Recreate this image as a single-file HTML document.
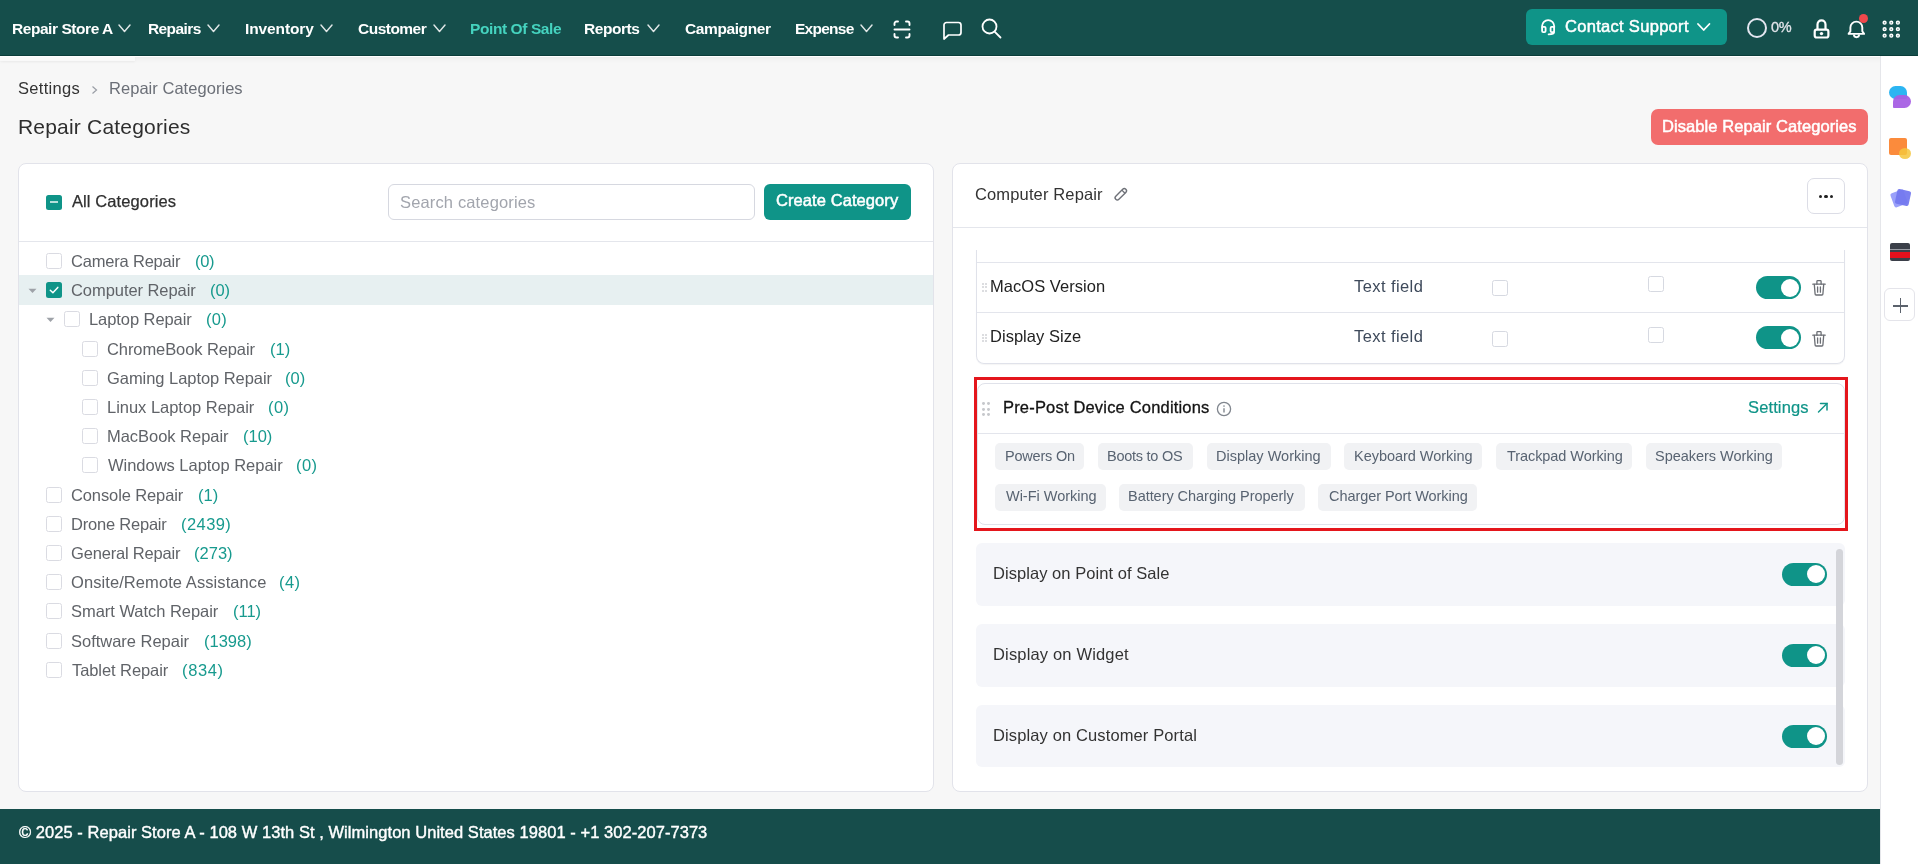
<!DOCTYPE html>
<html><head><meta charset="utf-8"><title>Repair Categories</title><style>
*{box-sizing:border-box;margin:0;padding:0}
html,body{width:1918px;height:864px;overflow:hidden;background:#f7f7f7;font-family:"Liberation Sans",sans-serif;color:#333}
.t{position:absolute;white-space:nowrap;will-change:transform}
.box,.ic,.cb,.tog,.card{position:absolute}
#nav{position:absolute;left:0;top:0;width:1918px;height:56px;background:#154e4b;box-shadow:inset 0 -1px 0 #0a3d39,0 1px 0 #fff,0 3px 5px rgba(0,0,0,.05)}
#side{position:absolute;left:1880px;top:56px;width:38px;height:808px;background:#fff;border-left:1px solid #e5e6ea}
#footer{position:absolute;left:0;top:809px;width:1880px;height:55px;background:#164d4b}
.card{background:#fff;border:1px solid #e2e3ea;border-radius:8px}
.cb{width:16px;height:16px;border:1px solid #dadbe2;border-radius:2.5px;background:#fff}
.tog{width:45px;height:23px;border-radius:12px;background:#0f9488}
.tog:after{content:"";position:absolute;left:25px;top:2.5px;width:18px;height:18px;border-radius:50%;background:#fff}
</style></head><body>
<div id="nav"></div>
<div class="box" style="left:0;top:57px;width:135px;height:4px;background:#f9f9f9;box-shadow:0 1px 3px rgba(0,0,0,.05)"></div>
<div id="t1" class="t" style="left:11.70px;top:20px;font-size:15.5px;line-height:17px;color:#fff;font-weight:bold;letter-spacing:-0.445px">Repair Store A</div>
<div id="t2" class="t" style="left:148.20px;top:20px;font-size:15.5px;line-height:17px;color:#fff;font-weight:bold;letter-spacing:-0.600px">Repairs</div>
<div id="t3" class="t" style="left:244.96px;top:20px;font-size:15.5px;line-height:17px;color:#fff;font-weight:bold;letter-spacing:-0.118px">Inventory</div>
<div id="t4" class="t" style="left:358.02px;top:20px;font-size:15.5px;line-height:17px;color:#fff;font-weight:bold;letter-spacing:-0.516px">Customer</div>
<div id="t5" class="t" style="left:470.20px;top:20px;font-size:15.5px;line-height:17px;color:#45d3bf;font-weight:bold;letter-spacing:-0.405px">Point Of Sale</div>
<div id="t6" class="t" style="left:584.20px;top:20px;font-size:15.5px;line-height:17px;color:#fff;font-weight:bold;letter-spacing:-0.460px">Reports</div>
<div id="t7" class="t" style="left:684.50px;top:20px;font-size:15.5px;line-height:17px;color:#fff;font-weight:bold;letter-spacing:-0.397px">Campaigner</div>
<div id="t8" class="t" style="left:794.70px;top:20px;font-size:15.5px;line-height:17px;color:#fff;font-weight:bold;letter-spacing:-0.733px">Expense</div>
<svg class="ic" style="left:118px;top:24px" width="13" height="8.5" viewBox="0 0 13 8.5"><path d="M1 1 L6.5 7.5 L12 1" fill="none" stroke="#dfe6e6" stroke-width="1.45" stroke-linecap="round" stroke-linejoin="round"/></svg>
<svg class="ic" style="left:206.5px;top:24px" width="13" height="8.5" viewBox="0 0 13 8.5"><path d="M1 1 L6.5 7.5 L12 1" fill="none" stroke="#dfe6e6" stroke-width="1.45" stroke-linecap="round" stroke-linejoin="round"/></svg>
<svg class="ic" style="left:320px;top:24px" width="13" height="8.5" viewBox="0 0 13 8.5"><path d="M1 1 L6.5 7.5 L12 1" fill="none" stroke="#dfe6e6" stroke-width="1.45" stroke-linecap="round" stroke-linejoin="round"/></svg>
<svg class="ic" style="left:433.4px;top:24px" width="13" height="8.5" viewBox="0 0 13 8.5"><path d="M1 1 L6.5 7.5 L12 1" fill="none" stroke="#dfe6e6" stroke-width="1.45" stroke-linecap="round" stroke-linejoin="round"/></svg>
<svg class="ic" style="left:647px;top:24px" width="13" height="8.5" viewBox="0 0 13 8.5"><path d="M1 1 L6.5 7.5 L12 1" fill="none" stroke="#dfe6e6" stroke-width="1.45" stroke-linecap="round" stroke-linejoin="round"/></svg>
<svg class="ic" style="left:860px;top:24px" width="13" height="8.5" viewBox="0 0 13 8.5"><path d="M1 1 L6.5 7.5 L12 1" fill="none" stroke="#dfe6e6" stroke-width="1.45" stroke-linecap="round" stroke-linejoin="round"/></svg>
<svg class="ic" style="left:892px;top:19px" width="20" height="21" viewBox="0 0 20 21"><g fill="none" stroke="#fff" stroke-width="1.9" stroke-linecap="round"><path d="M2.5 6 V4.5 A2 2 0 0 1 4.5 2.5 H6"/><path d="M14 2.5 H15.5 A2 2 0 0 1 17.5 4.5 V6"/><path d="M17.5 15 V16.5 A2 2 0 0 1 15.5 18.5 H14"/><path d="M6 18.5 H4.5 A2 2 0 0 1 2.5 16.5 V15"/><path d="M2.5 10.5 H17.5"/></g></svg>
<svg class="ic" style="left:941px;top:20px" width="23" height="21" viewBox="0 0 23 21"><path d="M3 19 V5 A2.5 2.5 0 0 1 5.5 2.5 H17.5 A2.5 2.5 0 0 1 20 5 V12.5 A2.5 2.5 0 0 1 17.5 15 H7.5 Z" fill="none" stroke="#fff" stroke-width="1.7" stroke-linejoin="round"/></svg>
<svg class="ic" style="left:980px;top:17px" width="23" height="23" viewBox="0 0 23 23"><circle cx="9.5" cy="9.5" r="7" fill="none" stroke="#fff" stroke-width="1.8"/><path d="M14.6 14.6 L20.5 20.5" stroke="#fff" stroke-width="1.8" stroke-linecap="round"/></svg>
<div class="box" style="left:1526px;top:9px;width:201px;height:36px;background:#0f9488;border-radius:6px"></div>
<svg class="ic" style="left:1539px;top:17px" width="19" height="20" viewBox="0 0 19 20"><g fill="none" stroke="#fff" stroke-width="1.8" stroke-linecap="round" stroke-linejoin="round"><path d="M3.1 10.5 V9.1 A6.05 6.05 0 0 1 15.2 9.1 V10.5"/><rect x="3.1" y="9.9" width="3.5" height="5.3" rx="1.1"/><rect x="11.6" y="9.9" width="3.5" height="5.3" rx="1.1"/><path d="M15.1 15 Q15.1 17.3 9.6 17.3"/></g></svg>
<div id="t9" class="t" style="left:1564.52px;top:17px;font-size:16.5px;line-height:18px;color:#fff;letter-spacing:0.302px;-webkit-text-stroke:0.5px #fff">Contact Support</div>
<svg class="ic" style="left:1697.4px;top:22.6px" width="13.4" height="8" viewBox="0 0 13.4 8"><path d="M1 1 L6.7 7 L12.4 1" fill="none" stroke="#fff" stroke-width="1.8" stroke-linecap="round" stroke-linejoin="round"/></svg>
<div class="box" style="left:1747px;top:18px;width:20px;height:20px;border:2px solid #e4e6f0;border-radius:50%"></div>
<div id="t10" class="t" style="left:1771.00px;top:19px;font-size:14.5px;line-height:16px;color:#e2e4ea;letter-spacing:-0.280px;-webkit-text-stroke:0.3px #e2e4ea">0%</div>
<svg class="ic" style="left:1811px;top:17px" width="21" height="23" viewBox="0 0 21 23"><g fill="none" stroke="#fff" stroke-width="2.2"><path d="M6.5 12.5 V7.4 A4 4 0 0 1 14.5 7.4 V12.5"/><rect x="3.7" y="12.7" width="13.7" height="7.8" rx="2"/></g><circle cx="10.5" cy="16.6" r="1.7" fill="#fff"/></svg>
<svg class="ic" style="left:1846px;top:18px" width="21" height="22" viewBox="0 0 21 22"><g fill="none" stroke="#fff" stroke-width="1.9" stroke-linejoin="round"><path d="M2.6 15.9 H18.1 L16.3 13.2 V9.6 A5.8 5.8 0 0 0 4.4 9.6 V13.2 Z"/><path d="M7.9 16.6 A2.6 2.6 0 0 0 13.1 16.6"/></g></svg>
<div class="box" style="left:1859px;top:14px;width:9px;height:9px;background:#f0484c;border-radius:50%"></div>
<svg class="ic" style="left:1880px;top:18px" width="22" height="22" viewBox="0 0 22 22"><circle cx="4.6" cy="4.7" r="1.45" fill="rgba(255,255,255,.4)" stroke="#fff" stroke-width="1.4"/><circle cx="4.6" cy="11.2" r="1.45" fill="rgba(255,255,255,.4)" stroke="#fff" stroke-width="1.4"/><circle cx="4.6" cy="17.7" r="1.45" fill="rgba(255,255,255,.4)" stroke="#fff" stroke-width="1.4"/><circle cx="11.3" cy="4.7" r="1.45" fill="rgba(255,255,255,.4)" stroke="#fff" stroke-width="1.4"/><circle cx="11.3" cy="11.2" r="1.45" fill="rgba(255,255,255,.4)" stroke="#fff" stroke-width="1.4"/><circle cx="11.3" cy="17.7" r="1.45" fill="rgba(255,255,255,.4)" stroke="#fff" stroke-width="1.4"/><circle cx="17.9" cy="4.7" r="1.45" fill="rgba(255,255,255,.4)" stroke="#fff" stroke-width="1.4"/><circle cx="17.9" cy="11.2" r="1.45" fill="rgba(255,255,255,.4)" stroke="#fff" stroke-width="1.4"/><circle cx="17.9" cy="17.7" r="1.45" fill="rgba(255,255,255,.4)" stroke="#fff" stroke-width="1.4"/></svg>
<div id="side"></div>
<div class="box" style="left:1889px;top:86px;width:18px;height:12.5px;background:#2cb5f2;border-radius:7px 7px 2px 7px"></div>
<div class="box" style="left:1893px;top:95px;width:18px;height:12.5px;background:#a65fe4;border-radius:7px 7px 7px 1px;opacity:.95"></div>
<div class="box" style="left:1889px;top:138px;width:18px;height:16.5px;background:#fb8b3c;border-radius:2px"></div>
<div class="box" style="left:1899px;top:148px;width:12px;height:11px;background:#f5c63c;border-radius:50%;opacity:.85"></div>
<div class="box" style="left:1892px;top:191px;width:14px;height:15px;background:#9aa0fa;border-radius:2px;transform:rotate(-20deg)"></div>
<div class="box" style="left:1896px;top:190px;width:14px;height:15px;background:#7479ef;border-radius:2px;transform:rotate(12deg);opacity:.95"></div>
<div class="box" style="left:1890px;top:243px;width:20px;height:18px;background:#3b3f49;border-radius:2px"></div>
<div class="box" style="left:1890px;top:248.5px;width:20px;height:1.5px;background:#9a9ca4"></div>
<div class="box" style="left:1890px;top:251.5px;width:20px;height:6.5px;background:#e5101c"></div>
<div class="box" style="left:1884px;top:288px;width:31px;height:33px;border:1px solid #e4e4ea;border-radius:6px;background:#fff"></div>
<div class="box" style="left:1893px;top:305px;width:15px;height:1.6px;background:#5b626c"></div>
<div class="box" style="left:1899.7px;top:298px;width:1.6px;height:15px;background:#5b626c"></div>
<div id="t11" class="t" style="left:17.70px;top:79px;font-size:16.5px;line-height:18px;color:#333;letter-spacing:0.315px">Settings</div>
<svg class="ic" style="left:91px;top:85px" width="8" height="10" viewBox="0 0 8 10"><path d="M1.5 1.5 L5.5 5 L1.5 8.5" fill="none" stroke="#9a9ea6" stroke-width="1.2"/></svg>
<div id="t12" class="t" style="left:108.70px;top:79px;font-size:16.5px;line-height:18px;color:#6b6f77;letter-spacing:0.038px">Repair Categories</div>
<div id="t13" class="t" style="left:18.20px;top:115px;font-size:21px;line-height:23px;color:#2e2e2e;letter-spacing:0.191px">Repair Categories</div>
<div class="box" style="left:1651px;top:109px;width:217px;height:36px;background:#f26d6d;border-radius:7px"></div>
<div id="t14" class="t" style="left:1662.20px;top:117px;font-size:16.5px;line-height:18px;color:#fff;letter-spacing:0.082px;-webkit-text-stroke:0.5px #fff">Disable Repair Categories</div>
<div class="card" style="left:18px;top:163px;width:916px;height:629px"></div>
<div class="box" style="left:46px;top:195px;width:16px;height:15px;background:#0f9488;border-radius:2.5px"></div>
<div class="box" style="left:50px;top:201.2px;width:8px;height:1.8px;background:#fff;opacity:.7"></div>
<div id="t15" class="t" style="left:72.02px;top:192px;font-size:16.5px;line-height:18px;color:#2f2f2f;letter-spacing:0.101px;-webkit-text-stroke:0.25px #2f2f2f">All Categories</div>
<div class="box" style="left:388px;top:184px;width:367px;height:36px;border:1px solid #d6d8e0;border-radius:6px;background:#fff"></div>
<div id="t16" class="t" style="left:400.20px;top:193px;font-size:16.5px;line-height:18px;color:#a2a5ad;letter-spacing:0.146px">Search categories</div>
<div class="box" style="left:764px;top:184px;width:147px;height:36px;background:#0f9488;border-radius:6px"></div>
<div id="t17" class="t" style="left:776.00px;top:191px;font-size:16.5px;line-height:18px;color:#fff;letter-spacing:0.081px;-webkit-text-stroke:0.5px #fff">Create Category</div>
<div class="box" style="left:19px;top:241px;width:914px;height:1px;background:#e4e6ec"></div>
<div class="box" style="left:19px;top:275px;width:914px;height:30px;background:#e7f0f1"></div>
<div class="cb" style="left:46px;top:253px"></div>
<div id="t18" class="t" style="left:70.70px;top:252px;font-size:16.5px;line-height:18px;color:#606368;letter-spacing:-0.194px">Camera Repair</div>
<div id="t19" class="t" style="left:194.68px;top:252px;font-size:16.5px;line-height:18px;color:#179a8e;letter-spacing:-0.360px">(0)</div>
<div class="box" style="left:46px;top:282px;width:16px;height:16px;background:#0f9488;border-radius:2.5px"></div>
<svg class="ic" style="left:46px;top:282px" width="16" height="16" viewBox="0 0 16 16"><path d="M4.3 8.2 L6.9 10.7 L11.8 5.4" fill="none" stroke="#fff" stroke-width="1.5" stroke-linecap="round" stroke-linejoin="round"/></svg>
<svg class="ic" style="left:28px;top:288px" width="9" height="6" viewBox="0 0 9 6"><path d="M0.5 0.8 H8.5 L4.5 5 Z" fill="#9ea2a8"/></svg>
<div id="t20" class="t" style="left:70.70px;top:281px;font-size:16.5px;line-height:18px;color:#606368;letter-spacing:-0.061px">Computer Repair</div>
<div id="t21" class="t" style="left:210.18px;top:281px;font-size:16.5px;line-height:18px;color:#179a8e;letter-spacing:-0.040px">(0)</div>
<div class="cb" style="left:64px;top:311px"></div>
<svg class="ic" style="left:46px;top:317px" width="9" height="6" viewBox="0 0 9 6"><path d="M0.5 0.8 H8.5 L4.5 5 Z" fill="#9ea2a8"/></svg>
<div id="t22" class="t" style="left:88.70px;top:310px;font-size:16.5px;line-height:18px;color:#606368;letter-spacing:-0.071px">Laptop Repair</div>
<div id="t23" class="t" style="left:206.46px;top:310px;font-size:16.5px;line-height:18px;color:#179a8e;letter-spacing:0.339px">(0)</div>
<div class="cb" style="left:82px;top:341px"></div>
<div id="t24" class="t" style="left:106.70px;top:340px;font-size:16.5px;line-height:18px;color:#606368;letter-spacing:-0.091px">ChromeBook Repair</div>
<div id="t25" class="t" style="left:269.70px;top:340px;font-size:16.5px;line-height:18px;color:#179a8e">(1)</div>
<div class="cb" style="left:82px;top:370px"></div>
<div id="t26" class="t" style="left:106.70px;top:369px;font-size:16.5px;line-height:18px;color:#606368;letter-spacing:-0.051px">Gaming Laptop Repair</div>
<div id="t27" class="t" style="left:285.46px;top:369px;font-size:16.5px;line-height:18px;color:#179a8e;letter-spacing:0.078px">(0)</div>
<div class="cb" style="left:82px;top:399px"></div>
<div id="t28" class="t" style="left:106.70px;top:398px;font-size:16.5px;line-height:18px;color:#606368;letter-spacing:-0.022px">Linux Laptop Repair</div>
<div id="t29" class="t" style="left:267.55px;top:398px;font-size:16.5px;line-height:18px;color:#179a8e;letter-spacing:0.403px">(0)</div>
<div class="cb" style="left:82px;top:428px"></div>
<div id="t30" class="t" style="left:106.70px;top:427px;font-size:16.5px;line-height:18px;color:#606368;letter-spacing:-0.031px">MacBook Repair</div>
<div id="t31" class="t" style="left:243.00px;top:427px;font-size:16.5px;line-height:18px;color:#179a8e">(10)</div>
<div class="cb" style="left:82px;top:457px"></div>
<div id="t32" class="t" style="left:107.50px;top:456px;font-size:16.5px;line-height:18px;color:#606368;letter-spacing:-0.023px">Windows Laptop Repair</div>
<div id="t33" class="t" style="left:295.92px;top:456px;font-size:16.5px;line-height:18px;color:#179a8e;letter-spacing:0.468px">(0)</div>
<div class="cb" style="left:46px;top:487px"></div>
<div id="t34" class="t" style="left:70.70px;top:486px;font-size:16.5px;line-height:18px;color:#606368;letter-spacing:-0.112px">Console Repair</div>
<div id="t35" class="t" style="left:198.00px;top:486px;font-size:16.5px;line-height:18px;color:#179a8e">(1)</div>
<div class="cb" style="left:46px;top:516px"></div>
<div id="t36" class="t" style="left:70.70px;top:515px;font-size:16.5px;line-height:18px;color:#606368;letter-spacing:-0.213px">Drone Repair</div>
<div id="t37" class="t" style="left:181.46px;top:515px;font-size:16.5px;line-height:18px;color:#179a8e;letter-spacing:0.428px">(2439)</div>
<div class="cb" style="left:46px;top:545px"></div>
<div id="t38" class="t" style="left:70.70px;top:544px;font-size:16.5px;line-height:18px;color:#606368;letter-spacing:-0.179px">General Repair</div>
<div id="t39" class="t" style="left:194.46px;top:544px;font-size:16.5px;line-height:18px;color:#179a8e;letter-spacing:0.013px">(273)</div>
<div class="cb" style="left:46px;top:574px"></div>
<div id="t40" class="t" style="left:70.70px;top:573px;font-size:16.5px;line-height:18px;color:#606368;letter-spacing:0.079px">Onsite/Remote Assistance</div>
<div id="t41" class="t" style="left:279.44px;top:573px;font-size:16.5px;line-height:18px;color:#179a8e;letter-spacing:0.468px">(4)</div>
<div class="cb" style="left:46px;top:603px"></div>
<div id="t42" class="t" style="left:70.70px;top:602px;font-size:16.5px;line-height:18px;color:#606368;letter-spacing:-0.035px">Smart Watch Repair</div>
<div id="t43" class="t" style="left:232.70px;top:602px;font-size:16.5px;line-height:18px;color:#179a8e">(11)</div>
<div class="cb" style="left:46px;top:633px"></div>
<div id="t44" class="t" style="left:70.70px;top:632px;font-size:16.5px;line-height:18px;color:#606368;letter-spacing:-0.019px">Software Repair</div>
<div id="t45" class="t" style="left:204.20px;top:632px;font-size:16.5px;line-height:18px;color:#179a8e">(1398)</div>
<div class="cb" style="left:46px;top:662px"></div>
<div id="t46" class="t" style="left:71.50px;top:661px;font-size:16.5px;line-height:18px;color:#606368;letter-spacing:-0.081px">Tablet Repair</div>
<div id="t47" class="t" style="left:181.94px;top:661px;font-size:16.5px;line-height:18px;color:#179a8e;letter-spacing:0.648px">(834)</div>
<div class="card" style="left:952px;top:163px;width:916px;height:629px"></div>
<div id="t48" class="t" style="left:974.68px;top:185px;font-size:16.5px;line-height:18px;color:#333;letter-spacing:0.138px">Computer Repair</div>
<svg class="ic" style="left:1110px;top:184px" width="22" height="22" viewBox="0 0 22 22"><g fill="none" stroke="#6e7178" stroke-width="1.4" transform="rotate(45 10.8 10.3)"><rect x="8.6" y="3.2" width="4.4" height="14.2" rx="2.2"/><path d="M8.6 6.6 H13"/></g></svg>
<div class="box" style="left:1807px;top:178px;width:38px;height:36px;border:1px solid #dcdde6;border-radius:7px;background:#fff"></div>
<div class="box" style="left:1818.9px;top:194.5px;width:3.2px;height:3.2px;border-radius:50%;background:#222"></div>
<div class="box" style="left:1824.4px;top:194.5px;width:3.2px;height:3.2px;border-radius:50%;background:#222"></div>
<div class="box" style="left:1829.9px;top:194.5px;width:3.2px;height:3.2px;border-radius:50%;background:#222"></div>
<div class="box" style="left:953px;top:227px;width:914px;height:1px;background:#e4e6ec"></div>
<div class="box" style="left:976px;top:230px;width:869px;height:134px;border:1px solid #e0e2ea;border-top:none;border-radius:0 0 8px 8px;box-shadow:0 1px 1px rgba(0,0,0,.04)"></div>
<div class="box" style="left:953px;top:228px;width:914px;height:22px;background:#fff"></div>
<div class="box" style="left:977px;top:262px;width:867px;height:1px;background:#e3e5ec"></div>
<div class="box" style="left:977px;top:312px;width:867px;height:1px;background:#e3e5ec"></div>
<div class="box" style="left:981.5px;top:283.0px;width:2.0px;height:2.0px;border-radius:50%;background:#d0d2d6"></div><div class="box" style="left:981.5px;top:286.4px;width:2.0px;height:2.0px;border-radius:50%;background:#d0d2d6"></div><div class="box" style="left:981.5px;top:289.8px;width:2.0px;height:2.0px;border-radius:50%;background:#d0d2d6"></div><div class="box" style="left:984.8px;top:283.0px;width:2.0px;height:2.0px;border-radius:50%;background:#d0d2d6"></div><div class="box" style="left:984.8px;top:286.4px;width:2.0px;height:2.0px;border-radius:50%;background:#d0d2d6"></div><div class="box" style="left:984.8px;top:289.8px;width:2.0px;height:2.0px;border-radius:50%;background:#d0d2d6"></div>
<div id="t49" class="t" style="left:989.70px;top:277px;font-size:16.5px;line-height:18px;color:#222;letter-spacing:0.040px">MacOS Version</div>
<div id="t50" class="t" style="left:1354.00px;top:277px;font-size:16.5px;line-height:18px;color:#3e4a5b;letter-spacing:0.412px">Text field</div>
<div class="cb" style="left:1492px;top:280px;border-color:#d6d9e1"></div>
<div class="cb" style="left:1648px;top:276px;border-color:#d6d9e1"></div>
<div class="tog" style="left:1756px;top:276px"></div>
<svg class="ic" style="left:1811px;top:278px" width="16" height="18" viewBox="0 0 16 18"><g fill="none" stroke="#6b6e74" stroke-width="1.3" stroke-linejoin="round" stroke-linecap="round"><path d="M1.8 6.2 H14.2"/><path d="M5.9 6.2 V3.4 A0.8 0.8 0 0 1 6.7 2.6 H9.3 A0.8 0.8 0 0 1 10.1 3.4 V6.2"/><path d="M3.3 6.4 L4.1 16 A1 1 0 0 0 5.1 17 H10.9 A1 1 0 0 0 11.9 16 L12.7 6.4"/><path d="M6.6 8.9 V14.2"/><path d="M9.4 8.9 V14.2"/></g></svg>
<div class="box" style="left:981.5px;top:333.6px;width:2.0px;height:2.0px;border-radius:50%;background:#d0d2d6"></div><div class="box" style="left:981.5px;top:337.0px;width:2.0px;height:2.0px;border-radius:50%;background:#d0d2d6"></div><div class="box" style="left:981.5px;top:340.4px;width:2.0px;height:2.0px;border-radius:50%;background:#d0d2d6"></div><div class="box" style="left:984.8px;top:333.6px;width:2.0px;height:2.0px;border-radius:50%;background:#d0d2d6"></div><div class="box" style="left:984.8px;top:337.0px;width:2.0px;height:2.0px;border-radius:50%;background:#d0d2d6"></div><div class="box" style="left:984.8px;top:340.4px;width:2.0px;height:2.0px;border-radius:50%;background:#d0d2d6"></div>
<div id="t51" class="t" style="left:989.70px;top:327px;font-size:16.5px;line-height:18px;color:#222;letter-spacing:0.029px">Display Size</div>
<div id="t52" class="t" style="left:1354.00px;top:327px;font-size:16.5px;line-height:18px;color:#3e4a5b;letter-spacing:0.412px">Text field</div>
<div class="cb" style="left:1492px;top:331px;border-color:#d6d9e1"></div>
<div class="cb" style="left:1648px;top:327px;border-color:#d6d9e1"></div>
<div class="tog" style="left:1756px;top:326px"></div>
<svg class="ic" style="left:1811px;top:329px" width="16" height="18" viewBox="0 0 16 18"><g fill="none" stroke="#6b6e74" stroke-width="1.3" stroke-linejoin="round" stroke-linecap="round"><path d="M1.8 6.2 H14.2"/><path d="M5.9 6.2 V3.4 A0.8 0.8 0 0 1 6.7 2.6 H9.3 A0.8 0.8 0 0 1 10.1 3.4 V6.2"/><path d="M3.3 6.4 L4.1 16 A1 1 0 0 0 5.1 17 H10.9 A1 1 0 0 0 11.9 16 L12.7 6.4"/><path d="M6.6 8.9 V14.2"/><path d="M9.4 8.9 V14.2"/></g></svg>
<div class="box" style="left:977px;top:383px;width:868px;height:142px;border:1px solid #e0e2ea;border-radius:8px;background:#fff"></div>
<div class="box" style="left:974px;top:377px;width:874px;height:154px;border:3px solid #e4161c"></div>
<div class="box" style="left:982.3px;top:402.3px;width:2.9px;height:2.9px;border-radius:50%;background:#c6c8cc"></div><div class="box" style="left:982.3px;top:407.7px;width:2.9px;height:2.9px;border-radius:50%;background:#c6c8cc"></div><div class="box" style="left:982.3px;top:413.1px;width:2.9px;height:2.9px;border-radius:50%;background:#c6c8cc"></div><div class="box" style="left:987.4px;top:402.3px;width:2.9px;height:2.9px;border-radius:50%;background:#c6c8cc"></div><div class="box" style="left:987.4px;top:407.7px;width:2.9px;height:2.9px;border-radius:50%;background:#c6c8cc"></div><div class="box" style="left:987.4px;top:413.1px;width:2.9px;height:2.9px;border-radius:50%;background:#c6c8cc"></div>
<div id="t53" class="t" style="left:1003.44px;top:398px;font-size:16.5px;line-height:18px;color:#141414;letter-spacing:0.182px;-webkit-text-stroke:0.3px #141414">Pre-Post Device Conditions</div>
<svg class="ic" style="left:1216px;top:401px" width="16" height="16" viewBox="0 0 16 16"><circle cx="8" cy="8" r="6.6" fill="none" stroke="#80868e" stroke-width="1.3"/><path d="M8 7.2 V11.6" stroke="#80868e" stroke-width="1.4"/><circle cx="8" cy="5.1" r="0.8" fill="#80868e"/></svg>
<div id="t54" class="t" style="left:1748.00px;top:398px;font-size:16.5px;line-height:18px;color:#0f9488;letter-spacing:0.129px;-webkit-text-stroke:0.2px #0f9488">Settings</div>
<svg class="ic" style="left:1816px;top:401px" width="13" height="13" viewBox="0 0 13 13"><g fill="none" stroke="#0f9488" stroke-width="1.5" stroke-linecap="round"><path d="M2.5 11 L11 2.5"/><path d="M4.5 2.5 H11 V9"/></g></svg>
<div class="box" style="left:978px;top:433px;width:866px;height:1px;background:#e3e5ec"></div>
<div class="box" style="left:995.3px;top:443.3px;width:88.5px;height:26.5px;background:#f1f2f4;border-radius:5px"></div>
<div id="t55" class="t" style="left:1004.70px;top:448px;font-size:14.5px;line-height:16px;color:#586371;letter-spacing:-0.200px">Powers On</div>
<div class="box" style="left:1098.2px;top:443.3px;width:94.6px;height:26.5px;background:#f1f2f4;border-radius:5px"></div>
<div id="t56" class="t" style="left:1107.44px;top:448px;font-size:14.5px;line-height:16px;color:#586371;letter-spacing:-0.260px">Boots to OS</div>
<div class="box" style="left:1207.2px;top:443.3px;width:123.6px;height:26.5px;background:#f1f2f4;border-radius:5px"></div>
<div id="t57" class="t" style="left:1216.44px;top:448px;font-size:14.5px;line-height:16px;color:#586371;letter-spacing:0.007px">Display Working</div>
<div class="box" style="left:1344.4px;top:443.3px;width:137.6px;height:26.5px;background:#f1f2f4;border-radius:5px"></div>
<div id="t58" class="t" style="left:1353.96px;top:448px;font-size:14.5px;line-height:16px;color:#586371;letter-spacing:-0.029px">Keyboard Working</div>
<div class="box" style="left:1496.3px;top:443.3px;width:135.3px;height:26.5px;background:#f1f2f4;border-radius:5px"></div>
<div id="t59" class="t" style="left:1506.50px;top:448px;font-size:14.5px;line-height:16px;color:#586371;letter-spacing:-0.070px">Trackpad Working</div>
<div class="box" style="left:1646.1px;top:443.3px;width:136.4px;height:26.5px;background:#f1f2f4;border-radius:5px"></div>
<div id="t60" class="t" style="left:1655.18px;top:448px;font-size:14.5px;line-height:16px;color:#586371;letter-spacing:-0.023px">Speakers Working</div>
<div class="box" style="left:995.3px;top:484.2px;width:110.5px;height:26.5px;background:#f1f2f4;border-radius:5px"></div>
<div id="t61" class="t" style="left:1005.50px;top:488px;font-size:14.5px;line-height:16px;color:#586371;letter-spacing:-0.020px">Wi-Fi Working</div>
<div class="box" style="left:1119.2px;top:484.2px;width:185.6px;height:26.5px;background:#f1f2f4;border-radius:5px"></div>
<div id="t62" class="t" style="left:1128.44px;top:488px;font-size:14.5px;line-height:16px;color:#586371;letter-spacing:-0.043px">Battery Charging Properly</div>
<div class="box" style="left:1318.3px;top:484.2px;width:158.6px;height:26.5px;background:#f1f2f4;border-radius:5px"></div>
<div id="t63" class="t" style="left:1328.50px;top:488px;font-size:14.5px;line-height:16px;color:#586371;letter-spacing:-0.062px">Charger Port Working</div>
<div class="box" style="left:976px;top:543.3px;width:869px;height:62.4px;background:#f5f6fa;border-radius:6px"></div>
<div id="t64" class="t" style="left:992.68px;top:564px;font-size:16.5px;line-height:18px;color:#333;letter-spacing:0.050px">Display on Point of Sale</div>
<div class="tog" style="left:1782px;top:562.8px"></div>
<div class="box" style="left:976px;top:624.2px;width:869px;height:62.4px;background:#f5f6fa;border-radius:6px"></div>
<div id="t65" class="t" style="left:992.68px;top:645px;font-size:16.5px;line-height:18px;color:#333;letter-spacing:0.162px">Display on Widget</div>
<div class="tog" style="left:1782px;top:643.7px"></div>
<div class="box" style="left:976px;top:705.1px;width:869px;height:62.4px;background:#f5f6fa;border-radius:6px"></div>
<div id="t66" class="t" style="left:992.68px;top:726px;font-size:16.5px;line-height:18px;color:#333;letter-spacing:0.122px">Display on Customer Portal</div>
<div class="tog" style="left:1782px;top:724.6px"></div>
<div class="box" style="left:1836px;top:549px;width:7.2px;height:216px;background:#d4d5da;border-radius:4px"></div>
<div id="footer"></div>
<div id="t67" class="t" style="left:19.28px;top:823px;font-size:16.5px;line-height:18px;color:#fff;letter-spacing:0.048px;-webkit-text-stroke:0.4px #fff">© 2025 - Repair Store A - 108 W 13th St , Wilmington United States 19801 - +1 302-207-7373</div>
</body></html>
